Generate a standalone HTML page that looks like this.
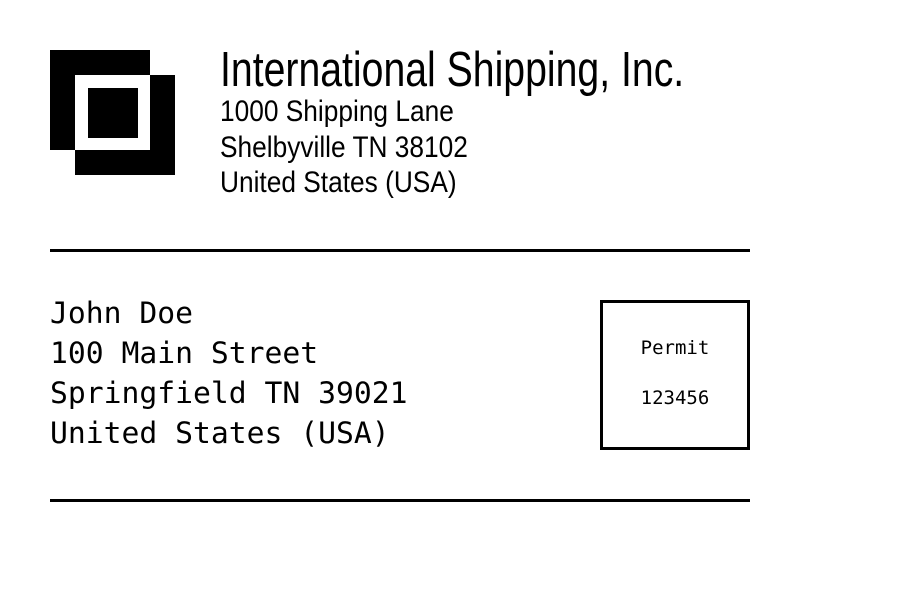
<!DOCTYPE html>
<html><head><style>
body{margin:0;width:912px;height:608px;background:#fff;position:relative;overflow:hidden}
.a{position:absolute;white-space:nowrap;line-height:1}
.s{font-family:"Liberation Sans",sans-serif;color:#000;transform-origin:0 0}
.m{font-family:"DejaVu Sans Mono","Liberation Mono",monospace;color:#000}
.b{position:absolute;background:#000}
</style></head><body>
<div class="b" style="left:50px;top:50px;width:100px;height:100px"></div>
<div class="b" style="left:75px;top:75px;width:100px;height:100px"></div>
<div style="position:absolute;left:75px;top:75px;width:75px;height:75px;background:#fff"></div>
<div class="b" style="left:88px;top:88px;width:50px;height:50px"></div>

<div class="a s" style="left:220px;top:46px;font-size:49px;transform:scaleX(0.80)">International Shipping, Inc.</div>
<div class="a s" style="left:220px;top:97px;font-size:30px;transform:scaleX(0.876)">1000 Shipping Lane</div>
<div class="a s" style="left:220px;top:133px;font-size:30px;transform:scaleX(0.876)">Shelbyville TN 38102</div>
<div class="a s" style="left:220px;top:168px;font-size:30px;transform:scaleX(0.876)">United States (USA)</div>

<div class="b" style="left:50px;top:249px;width:700px;height:3px"></div>
<div class="b" style="left:50px;top:499px;width:700px;height:3px"></div>

<div class="a m" style="left:50px;top:299px;font-size:29.7px;">John Doe</div>
<div class="a m" style="left:50px;top:339px;font-size:29.7px;">100 Main Street</div>
<div class="a m" style="left:50px;top:379px;font-size:29.7px;">Springfield TN 39021</div>
<div class="a m" style="left:50px;top:419px;font-size:29.7px;">United States (USA)</div>

<div style="position:absolute;left:600px;top:300px;width:144px;height:144px;border:3px solid #000"></div>
<div class="a m" style="left:600px;width:150px;text-align:center;top:339px;font-size:19px;">Permit</div>
<div class="a m" style="left:600px;width:150px;text-align:center;top:389px;font-size:19px;">123456</div>
</body></html>
